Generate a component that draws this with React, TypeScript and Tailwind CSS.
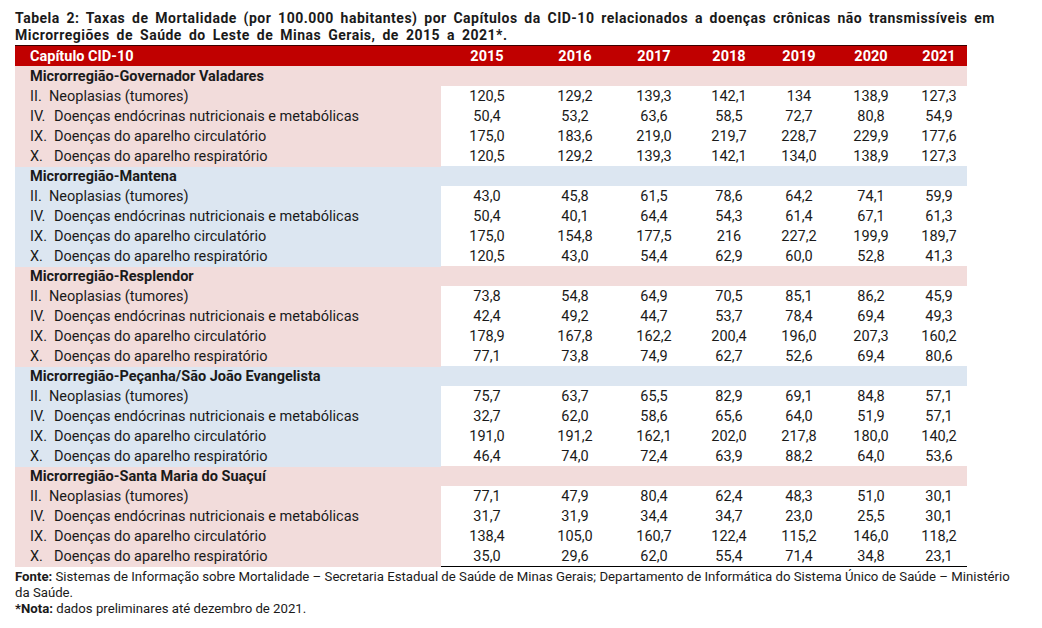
const years = ['2015', '2016', '2017', '2018', '2019', '2020', '2021'];

const chapters = [
  { num: 'II.', label: 'Neoplasias (tumores)', narrow: true },
  { num: 'IV.', label: 'Doenças endócrinas nutricionais e metabólicas' },
  { num: 'IX.', label: 'Doenças do aparelho circulatório' },
  { num: 'X.', label: 'Doenças do aparelho respiratório' },
];

const regions = [
  {
    name: 'Microrregião-Governador Valadares',
    tint: 'pink',
    rows: [
      ['120,5', '129,2', '139,3', '142,1', '134', '138,9', '127,3'],
      ['50,4', '53,2', '63,6', '58,5', '72,7', '80,8', '54,9'],
      ['175,0', '183,6', '219,0', '219,7', '228,7', '229,9', '177,6'],
      ['120,5', '129,2', '139,3', '142,1', '134,0', '138,9', '127,3'],
    ],
  },
  {
    name: 'Microrregião-Mantena',
    tint: 'blue',
    rows: [
      ['43,0', '45,8', '61,5', '78,6', '64,2', '74,1', '59,9'],
      ['50,4', '40,1', '64,4', '54,3', '61,4', '67,1', '61,3'],
      ['175,0', '154,8', '177,5', '216', '227,2', '199,9', '189,7'],
      ['120,5', '43,0', '54,4', '62,9', '60,0', '52,8', '41,3'],
    ],
  },
  {
    name: 'Microrregião-Resplendor',
    tint: 'pink',
    rows: [
      ['73,8', '54,8', '64,9', '70,5', '85,1', '86,2', '45,9'],
      ['42,4', '49,2', '44,7', '53,7', '78,4', '69,4', '49,3'],
      ['178,9', '167,8', '162,2', '200,4', '196,0', '207,3', '160,2'],
      ['77,1', '73,8', '74,9', '62,7', '52,6', '69,4', '80,6'],
    ],
  },
  {
    name: 'Microrregião-Peçanha/São João Evangelista',
    tint: 'blue',
    rows: [
      ['75,7', '63,7', '65,5', '82,9', '69,1', '84,8', '57,1'],
      ['32,7', '62,0', '58,6', '65,6', '64,0', '51,9', '57,1'],
      ['191,0', '191,2', '162,1', '202,0', '217,8', '180,0', '140,2'],
      ['46,4', '74,0', '72,4', '63,9', '88,2', '64,0', '53,6'],
    ],
  },
  {
    name: 'Microrregião-Santa Maria do Suaçuí',
    tint: 'pink',
    rows: [
      ['77,1', '47,9', '80,4', '62,4', '48,3', '51,0', '30,1'],
      ['31,7', '31,9', '34,4', '34,7', '23,0', '25,5', '30,1'],
      ['138,4', '105,0', '160,7', '122,4', '115,2', '146,0', '118,2'],
      ['35,0', '29,6', '62,0', '55,4', '71,4', '34,8', '23,1'],
    ],
  },
];

const grid = 'grid grid-cols-[426px_92px_84px_74px_76px_64px_80px_56px]';

export default function App() {
  return (
    <div className="w-[1042px] h-[628px] bg-white text-[#1a1a1a] font-['Roboto',sans-serif] px-[15px] pt-[10px]">
      <div className="w-[980px] text-[14px] leading-[17px] font-bold tracking-[0.5px]">
        <p className="whitespace-nowrap text-justify [text-align-last:justify]">
          Tabela 2: Taxas de Mortalidade (por 100.000 habitantes) por Capítulos da CID-10 relacionados a doenças crônicas não transmissíveis em
        </p>
        <p className="[word-spacing:3px]">Microrregiões de Saúde do Leste de Minas Gerais, de 2015 a 2021*.</p>
      </div>

      <div className="w-[952px] mt-[1px] border-t border-[#3a0000] border-b border-b-black">
        <div className={`${grid} h-[20px] bg-[#c00000] text-white font-bold text-[14.5px] leading-[21px]`}>
          <div className="pl-[15px]">Capítulo CID-10</div>
          {years.map((y) => (
            <div key={y} className="text-center">{y}</div>
          ))}
        </div>

        {regions.map((r) => {
          const tint = r.tint === 'pink' ? 'bg-[#f2dcdb]' : 'bg-[#dce6f1]';
          return (
            <div key={r.name}>
              <div className={`h-[20px] ${tint} pl-[15px] font-bold text-[14.5px] leading-[21px]`}>{r.name}</div>
              {r.rows.map((vals, i) => (
                <div key={i} className={`${grid} h-[20px] text-[14.5px] leading-[21px]`}>
                  <div className={`${tint} pl-[15px] flex`}>
                    <span className={chapters[i].narrow ? 'w-[19px]' : 'w-[24px]'}>{chapters[i].num}</span>
                    <span>{chapters[i].label}</span>
                  </div>
                  {vals.map((v, j) => (
                    <div key={j} className="text-center">{v}</div>
                  ))}
                </div>
              ))}
            </div>
          );
        })}
      </div>

      <div className="w-[1008px] mt-[2px] text-[13.2px] leading-[15.5px]">
        <p>
          <span className="font-bold">Fonte:</span> Sistemas de Informação sobre Mortalidade – Secretaria Estadual de Saúde de Minas Gerais; Departamento de Informática do Sistema Único de Saúde – Ministério da Saúde.
        </p>
        <p className="mt-[1px]">
          <span className="font-bold">*Nota:</span> dados preliminares até dezembro de 2021.
        </p>
      </div>
    </div>
  );
}
